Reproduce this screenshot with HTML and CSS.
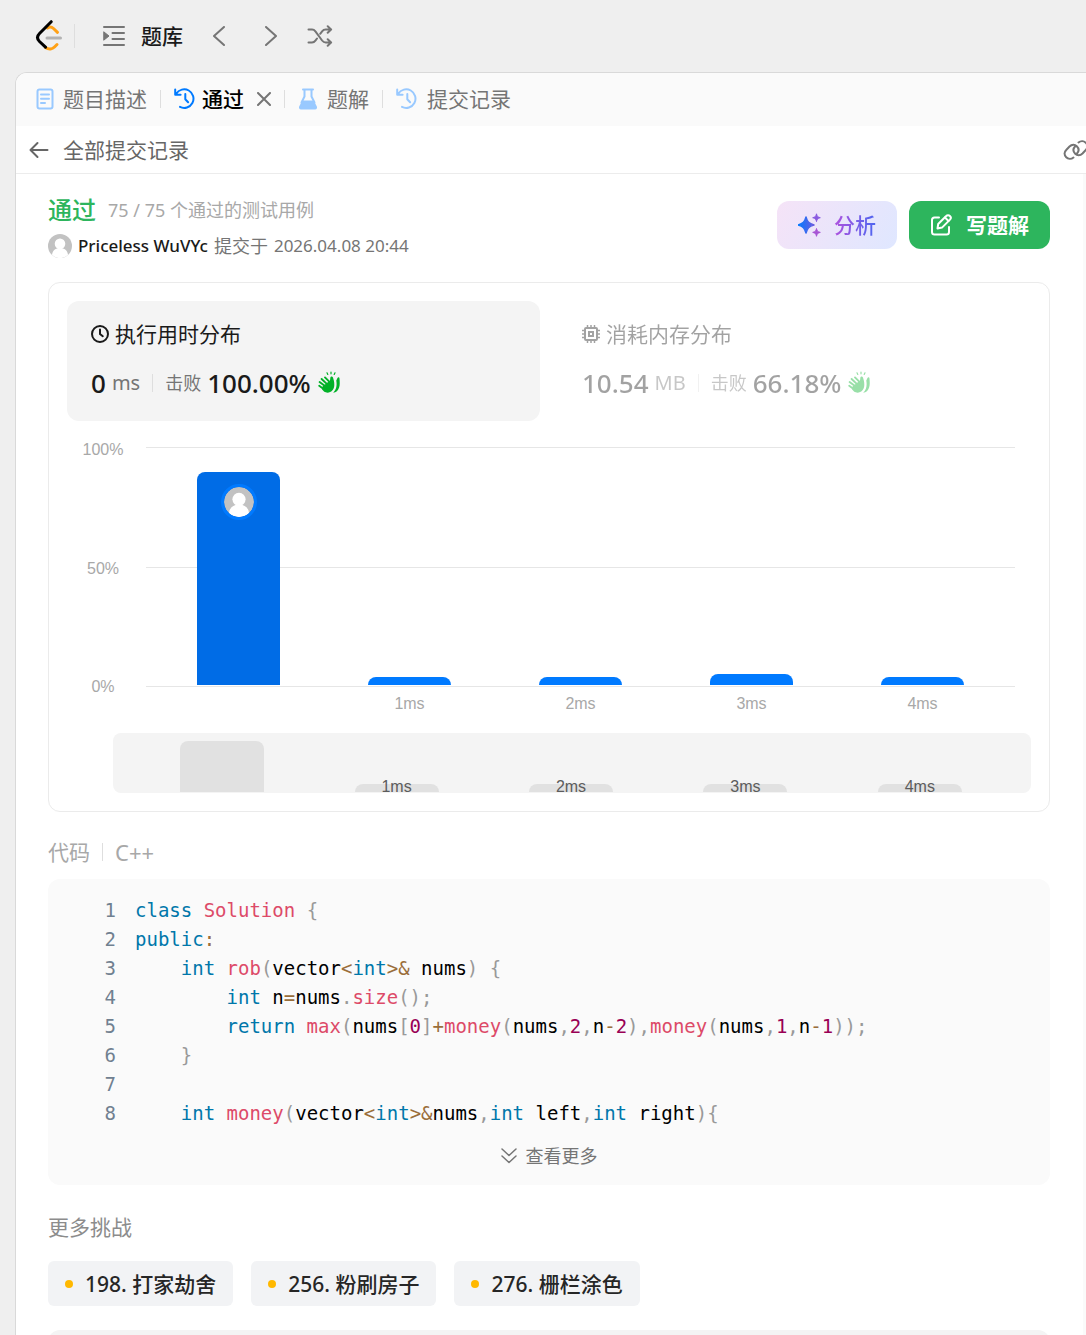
FILE: index.html
```
<!DOCTYPE html>
<html lang="zh-CN">
<head>
    <meta charset="UTF-8">
    <meta name="viewport" content="width=device-width, initial-scale=1.0">
    <title>打家劫舍 - 提交记录</title>
    <link rel="stylesheet" href="styles.css">
</head>
<body>
    <svg class="sprite" aria-hidden="true">
        <symbol id="icon-history" viewBox="0 0 22 22">
            <path d="M2.2 5.8A9.3 9.3 0 1 1 6 18.9M1.2 1.5v5.2h5.4M11.3 6v5.2l2.8 3" fill="none" stroke="currentColor" stroke-width="2" stroke-linecap="round" stroke-linejoin="round"/>
        </symbol>
        <symbol id="icon-clap" viewBox="0 0 24 24">
            <path d="M2.2 14.800l4.400 3.200M2.600 11l6 4.600M4.600 8l6 5.600M8 6.400l5 5" fill="none" stroke="currentColor" stroke-width="1.900" stroke-linecap="round"/>
            <path d="M5.500 15.500l7.500-6 .4-3c.2-1.400 2.200-1.400 2.600 0 .6 2.200 1.400 4.200 1.300 7.600-.1 4.600-3.100 7.600-6.800 7.600-2.600 0-4.200-1.600-5.500-3.400z" fill="currentColor"/>
            <path d="M19.300 9.600l1.300-2.800c.6-1 1.800-.6 1.900.6.2 3 .6 6.400-.4 9.200-.9 3-2.900 5-5.900 5.200 3-3 4-6.600 3.100-12.200z" fill="currentColor"/>
            <path d="M10 1.800l.8 1.600M14 1v1.800M18 1.800l-.8 1.600" fill="none" stroke="currentColor" stroke-width="1.200" stroke-linecap="round"/>
        </symbol>
        <symbol id="icon-avatar" viewBox="0 0 30 30">
            <circle cx="15" cy="15" r="15" fill="#c2c2c2"/>
            <circle cx="15" cy="12.300" r="6.600" fill="#fff"/>
            <path d="M5 26.300C5.500 20.500 9.500 17.500 15 17.500s9.500 3 10 8.800A15 15 0 0 1 5 26.300z" fill="#fff"/>
        </symbol>
    </svg>

    <header class="topbar">
        <a class="logo" href="#" aria-label="首页">
            <svg width="28" height="32" viewBox="0 0 28 32" fill="none" stroke-width="3" stroke-linecap="round" stroke-linejoin="round">
                <path d="M12.500 8c2-1.500 4.200-1.200 6 .5l4 3.800M10.500 27.500c3.500 2.500 7 1.500 9-.5l2.500-2.500" stroke="#ffa116"/>
                <path d="M12 18h13.500" stroke="#b3b3b3"/>
                <path d="M16.200 1.700L4.500 13.500c-2.500 2.500-2.500 5.500 0 8l6 5.700" stroke="#000"/>
            </svg>
        </a>
        <span class="divider topbar-divider"></span>
        <button class="nav-list" type="button">
            <svg width="24" height="22" viewBox="0 0 24 22" fill="none" stroke="#757575" stroke-width="2" stroke-linecap="round">
                <path d="M2 2h20M10.500 8h11.500M10.500 14h11.500M2 20h20"/>
                <path d="M2 7l5 4-5 4z" fill="#757575" stroke-width="1" stroke-linejoin="round"/>
            </svg>
            <span>题库</span>
        </button>
        <button class="nav-arrow" type="button" aria-label="上一题">
            <svg width="12" height="20" viewBox="0 0 12 20" fill="none" stroke="#757575" stroke-width="2" stroke-linecap="round" stroke-linejoin="round"><path d="M11 1L1 10l10 9"/></svg>
        </button>
        <button class="nav-arrow" type="button" aria-label="下一题">
            <svg width="12" height="20" viewBox="0 0 12 20" fill="none" stroke="#757575" stroke-width="2" stroke-linecap="round" stroke-linejoin="round"><path d="M1 1l10 9-10 9"/></svg>
        </button>
        <button class="nav-arrow" type="button" aria-label="随机一题">
            <svg width="26" height="22" viewBox="0 0 26 22" fill="none" stroke="#757575" stroke-width="2" stroke-linecap="round" stroke-linejoin="round">
                <path d="M1.500 4.500h3.500c1.500 0 2.500.6 3.400 1.800l6.700 9.200c1 1.300 2 2 3.600 2h5M1.500 17.500h3.500c1.500 0 2.500-.6 3.400-1.800l1.600-2.200M13.200 8.800l1.900-2.500c1-1.300 2-1.800 3.600-1.800h5M20.700 1.300l3.400 3.200-3.400 3.300M20.700 14.200l3.400 3.300-3.400 3.200"/>
            </svg>
        </button>
    </header>

    <main class="panel">
        <nav class="tabs">
            <a class="tab" href="#">
                <svg class="tab-icon" width="18" height="22" viewBox="0 0 18 22" fill="none" stroke="currentColor" stroke-width="2" stroke-linecap="round"><rect x="1.500" y="1.500" width="15" height="19" rx="2"/><path d="M5 6.500h8M5 10.700h8M5 15h4"/></svg>
                题目描述
            </a>
            <span class="divider"></span>
            <a class="tab active" href="#">
                <svg class="tab-icon" width="22" height="22"><use href="#icon-history"/></svg>
                通过
            </a>
            <button class="tab-close" type="button" aria-label="关闭">
                <svg width="14" height="14" viewBox="0 0 14 14" stroke="#757575" stroke-width="2" stroke-linecap="round"><path d="M1 1l12 12M13 1L1 13"/></svg>
            </button>
            <span class="divider"></span>
            <a class="tab" href="#">
                <svg class="tab-icon" width="20" height="22" viewBox="0 0 20 22"><path d="M5 1.500h10M6.500 2v6.500l-3 6M13.500 2v6.500l3 6" fill="none" stroke="currentColor" stroke-width="2" stroke-linecap="round"/><path d="M4.200 12.500h11.600l3 6c.7 1.500-.1 3-1.800 3H3c-1.700 0-2.500-1.500-1.800-3z" fill="currentColor"/></svg>
                题解
            </a>
            <span class="divider"></span>
            <a class="tab" href="#">
                <svg class="tab-icon" width="22" height="22"><use href="#icon-history"/></svg>
                提交记录
            </a>
        </nav>

        <div class="subheader">
            <a class="back" href="#">
                <svg width="20" height="18" viewBox="0 0 20 18" fill="none" stroke="#666" stroke-width="2" stroke-linecap="round" stroke-linejoin="round"><path d="M18.500 9H1.500M8.500 2L1.500 9l7 7"/></svg>
                <span>全部提交记录</span>
            </a>
            <button class="copy-link" type="button" aria-label="复制链接">
                <svg width="26" height="20" viewBox="0 0 26 20" fill="none" stroke="#757575" stroke-width="2" stroke-linecap="round" stroke-linejoin="round">
                    <path d="M10.500 17.500c-2.500 2-5.500 1.500-7.300-.3-2.200-2.200-2.200-5 0-7.200L6.500 6.500c2.300-2.200 5.300-2.200 7.300-.2 2.200 2.200 2.200 5 .2 7.200"/>
                    <path d="M15.500 2.500c2.500-2 5.500-1.500 7.300.3 2.200 2.200 2.200 5 0 7.200l-3.300 3.500c-2.300 2.200-5.300 2.200-7.300.2-2.200-2.200-2.200-5-.2-7.200"/>
                </svg>
            </button>
        </div>

        <div class="content">
            <section class="summary">
                <div class="summary-info">
                    <div class="status-row">
                        <h1>通过</h1>
                        <span class="cases">75 / 75 个通过的测试用例</span>
                    </div>
                    <div class="user-row">
                        <svg class="avatar" width="24" height="24"><use href="#icon-avatar"/></svg>
                        <strong>Priceless WuVYc</strong>
                        <span>提交于</span>
                        <time>2026.04.08 20:44</time>
                    </div>
                </div>
                <div class="actions">
                    <button class="btn btn-analyze" type="button">
                        <svg width="24" height="24" viewBox="0 0 24 24">
                            <defs>
                                <linearGradient id="spark-blue" x1="0" y1="0" x2="1" y2="0"><stop offset="0" stop-color="#007aff"/><stop offset="1" stop-color="#6b5be0"/></linearGradient>
                            </defs>
                            <path d="M8 4c1.300 5 3 6.700 8 8-5 1.300-6.700 3-8 8-1.300-5-3-6.700-8-8 5-1.300 6.700-3 8-8z" fill="url(#spark-blue)" stroke="url(#spark-blue)" stroke-width="1.500" stroke-linejoin="round"/>
                            <path d="M18.500.8c.5 2.500 1.300 3.300 3.800 3.900-2.500.5-3.300 1.300-3.800 3.900-.5-2.600-1.300-3.400-3.800-3.900 2.500-.6 3.300-1.400 3.800-3.900z" fill="#8a5be0" stroke="#8a5be0" stroke-linejoin="round"/>
                            <path d="M18.500 15.500c.5 2.500 1.300 3.300 3.800 3.900-2.500.5-3.300 1.300-3.800 3.900-.5-2.600-1.300-3.400-3.800-3.900 2.500-.6 3.300-1.400 3.800-3.900z" fill="#a755d4" stroke="#a755d4" stroke-linejoin="round"/>
                        </svg>
                        <span>分析</span>
                    </button>
                    <button class="btn btn-write" type="button">
                        <svg width="22" height="22" viewBox="0 0 22 22" fill="none" stroke="#fff" stroke-width="2" stroke-linecap="round" stroke-linejoin="round">
                            <path d="M9 3.500H4.500a2.500 2.500 0 0 0-2.500 2.500v12a2.500 2.500 0 0 0 2.500 2.500h12a2.500 2.500 0 0 0 2.500-2.500v-5M7.500 14.500l.7-4.500 8-8a2.300 2.300 0 0 1 3.800 3.600l-8 8z"/>
                            <path d="M15 3.500l3.500 3.500"/>
                        </svg>
                        <span>写题解</span>
                    </button>
                </div>
            </section>

            <section class="card">
                <div class="metrics">
                    <div class="metric selected">
                        <div class="metric-title">
                            <svg width="18" height="18" viewBox="0 0 18 18" fill="none" stroke="currentColor" stroke-width="2" stroke-linecap="round"><circle cx="9" cy="9" r="8"/><path d="M9 4.500V9l2.800 2.200"/></svg>
                            <h2>执行用时分布</h2>
                        </div>
                        <div class="metric-values">
                            <span class="value">0</span>
                            <span class="unit">ms</span>
                            <span class="divider"></span>
                            <span class="beats">击败</span>
                            <span class="value">100.00%</span>
                            <svg class="clap" width="24" height="24"><use href="#icon-clap"/></svg>
                        </div>
                    </div>
                    <div class="metric muted">
                        <div class="metric-title">
                            <svg width="18" height="18" viewBox="0 0 18 18" fill="none" stroke="currentColor" stroke-width="2"><rect x="3" y="3" width="12" height="12" rx="1"/><rect x="7" y="7" width="4" height="4"/><path d="M5.500 0v3M9 0v3M12.500 0v3M5.500 15v3M9 15v3M12.500 15v3M0 5.500h3M0 9h3M0 12.500h3M15 5.500h3M15 9h3M15 12.500h3" stroke-width="1.500"/></svg>
                            <h2>消耗内存分布</h2>
                        </div>
                        <div class="metric-values">
                            <span class="value">10.54</span>
                            <span class="unit">MB</span>
                            <span class="divider"></span>
                            <span class="beats">击败</span>
                            <span class="value">66.18%</span>
                            <svg class="clap" width="24" height="24"><use href="#icon-clap"/></svg>
                        </div>
                    </div>
                </div>

                <div class="chart">
                    <div class="y-axis">
                        <span>100%</span>
                        <span>50%</span>
                        <span>0%</span>
                    </div>
                    <div class="plot">
                        <div class="gridlines">
                            <div></div>
                            <div></div>
                        </div>
                        <div class="bars">
                            <div class="bar current" style="height: 213px">
                                <svg class="bar-avatar" width="30" height="30"><use href="#icon-avatar"/></svg>
                            </div>
                            <div class="bar" style="height: 8px"></div>
                            <div class="bar" style="height: 8px"></div>
                            <div class="bar" style="height: 11px"></div>
                            <div class="bar" style="height: 8px"></div>
                        </div>
                        <div class="x-axis">
                            <span></span>
                            <span>1ms</span>
                            <span>2ms</span>
                            <span>3ms</span>
                            <span>4ms</span>
                        </div>
                    </div>
                </div>

                <div class="overview">
                    <div class="overview-item"><div class="overview-bar" style="height: 51px"></div></div>
                    <div class="overview-item"><div class="overview-bar" style="height: 8px"></div><span>1ms</span></div>
                    <div class="overview-item"><div class="overview-bar" style="height: 8px"></div><span>2ms</span></div>
                    <div class="overview-item"><div class="overview-bar" style="height: 8px"></div><span>3ms</span></div>
                    <div class="overview-item"><div class="overview-bar" style="height: 8px"></div><span>4ms</span></div>
                </div>
            </section>

            <div class="code-header">
                <span>代码</span>
                <span class="divider"></span>
                <span class="lang">C++</span>
            </div>
            <section class="code-box">
<pre class="code"><span class="line"><i>1</i><b class="k">class</b> <b class="f">Solution</b> <b class="p">{</b></span>
<span class="line"><i>2</i><b class="k">public</b><b class="o">:</b></span>
<span class="line"><i>3</i>    <b class="k">int</b> <b class="f">rob</b><b class="p">(</b>vector<b class="o">&lt;</b><b class="k">int</b><b class="o">&gt;&amp;</b> nums<b class="p">)</b> <b class="p">{</b></span>
<span class="line"><i>4</i>        <b class="k">int</b> n<b class="o">=</b>nums<b class="p">.</b><b class="f">size</b><b class="p">();</b></span>
<span class="line"><i>5</i>        <b class="k">return</b> <b class="f">max</b><b class="p">(</b>nums<b class="p">[</b><b class="n">0</b><b class="p">]</b><b class="o">+</b><b class="f">money</b><b class="p">(</b>nums<b class="p">,</b><b class="n">2</b><b class="p">,</b>n<b class="o">-</b><b class="n">2</b><b class="p">),</b><b class="f">money</b><b class="p">(</b>nums<b class="p">,</b><b class="n">1</b><b class="p">,</b>n<b class="o">-</b><b class="n">1</b><b class="p">));</b></span>
<span class="line"><i>6</i>    <b class="p">}</b></span>
<span class="line"><i>7</i></span>
<span class="line"><i>8</i>    <b class="k">int</b> <b class="f">money</b><b class="p">(</b>vector<b class="o">&lt;</b><b class="k">int</b><b class="o">&gt;&amp;</b>nums<b class="p">,</b><b class="k">int</b> left<b class="p">,</b><b class="k">int</b> right<b class="p">){</b></span></pre>
                <button class="show-more" type="button">
                    <svg width="16" height="16" viewBox="0 0 16 16" fill="none" stroke="#757575" stroke-width="1.500" stroke-linecap="round" stroke-linejoin="round"><path d="M1 1l7 6.500L15 1M1 8l7 6.500L15 8"/></svg>
                    <span>查看更多</span>
                </button>
            </section>

            <h3 class="more-title">更多挑战</h3>
            <div class="challenges">
                <a class="chip" href="#"><span class="dot"></span>198. 打家劫舍</a>
                <a class="chip" href="#"><span class="dot"></span>256. 粉刷房子</a>
                <a class="chip" href="#"><span class="dot"></span>276. 栅栏涂色</a>
            </div>
            <textarea class="notes" aria-label="备注"></textarea>
        </div>
    </main>
</body>
</html>
```
FILE: styles.css
```
* {
    box-sizing: border-box;
}
body {
    margin: 0;
    height: 100vh;
    display: flex;
    flex-direction: column;
    overflow: hidden;
    background-color: #efefef;
    color: #1a1a1a;
    font-family: "Noto Sans", "Noto Sans CJK SC", sans-serif;
    font-size: 18px;
    line-height: 24px;
}
h1, h2, h3 {
    margin: 0;
    font-weight: normal;
}
a {
    color: inherit;
    text-decoration: none;
}
button {
    display: flex;
    align-items: center;
    padding: 0;
    border: none;
    background: none;
    font: inherit;
    color: inherit;
    cursor: pointer;
}
svg {
    display: block;
    flex-shrink: 0;
}
.sprite {
    position: absolute;
    width: 0;
    height: 0;
}
.divider {
    width: 1px;
    height: 18px;
    background-color: #dedede;
}

/* top bar */
.topbar {
    display: flex;
    align-items: center;
    height: 72px;
    flex-shrink: 0;
    padding-left: 35px;
}
.topbar-divider {
    height: 24px;
    margin: 0 27px 0 11px;
}
.nav-list {
    gap: 15px;
    font-size: 21px;
    font-weight: 500;
}
.nav-arrow {
    margin-left: 30px;
}
.nav-arrow + .nav-arrow {
    margin-left: 40px;
}
.nav-arrow + .nav-arrow + .nav-arrow {
    margin-left: 30px;
}

/* panel */
.panel {
    flex: 1;
    min-height: 0;
    display: flex;
    flex-direction: column;
    margin-left: 15px;
    border-top: 1px solid #d9d9d9;
    border-left: 1px solid #d9d9d9;
    border-top-left-radius: 12px;
    background-color: #fff;
    overflow: hidden;
}
.tabs {
    display: flex;
    align-items: center;
    gap: 13px;
    height: 53px;
    flex-shrink: 0;
    padding: 0 0 2px 20px;
    background-color: #fafafa;
}
.tab {
    display: flex;
    align-items: center;
    gap: 9px;
    font-size: 21px;
    color: #757575;
}
.tab-icon {
    color: #99c9ff;
}
.tab.active {
    gap: 6px;
    font-weight: 500;
    color: #000;
}
.tab.active .tab-icon {
    color: #007aff;
}
.subheader {
    display: flex;
    align-items: center;
    justify-content: space-between;
    height: 48px;
    flex-shrink: 0;
    padding-left: 13px;
    border-bottom: 1px solid #ececec;
}
.back {
    display: flex;
    align-items: center;
    gap: 14px;
    font-size: 21px;
    color: #666;
}
.copy-link {
    margin-right: -3px;
}
.content {
    flex: 1;
    min-height: 0;
    padding: 24px 33px 0 32px;
    border-right: 3px solid #fafafa;
    overflow: hidden;
}

/* summary */
.summary {
    display: flex;
    justify-content: space-between;
    margin-bottom: 24px;
}
.status-row {
    display: flex;
    align-items: center;
    gap: 12px;
    height: 24px;
}
.status-row h1 {
    font-size: 24px;
    font-weight: 500;
    color: #2db55d;
}
.cases {
    color: #a8a8a8;
}
.user-row {
    display: flex;
    align-items: center;
    gap: 6px;
    margin-top: 12px;
    color: #757575;
}
.user-row strong {
    font-size: 17px;
    font-weight: 500;
    color: #1a1a1a;
}
.user-row time {
    font-size: 17px;
}
.actions {
    display: flex;
    gap: 12px;
    margin-top: 3px;
}
.btn {
    gap: 12px;
    height: 48px;
    padding: 0 21px;
    border-radius: 12px;
    font-size: 21px;
    font-weight: 500;
}
.btn-analyze {
    background: linear-gradient(120deg, #f5e3f7, #dfe7ff);
}
.btn-analyze span {
    background: linear-gradient(90deg, #af52de, #4d66f0);
    background-clip: text;
    -webkit-background-clip: text;
    color: transparent;
}
.btn-write {
    gap: 14px;
    background-color: #2db55d;
    color: #fff;
    font-weight: 700;
}

/* distribution card */
.card {
    padding: 18px;
    border: 1px solid #ebebeb;
    border-radius: 12px;
}
.metrics {
    display: grid;
    grid-template-columns: 1fr 1fr;
    gap: 18px;
}
.metric {
    height: 120px;
    padding: 21px 24px;
    border-radius: 12px;
}
.metric.selected {
    background-color: #f4f4f4;
}
.metric.muted {
    opacity: 0.4;
}
.metric-title {
    display: flex;
    align-items: center;
    gap: 6px;
}
.metric-title h2 {
    font-size: 21px;
}
.metric-values {
    display: flex;
    align-items: center;
    gap: 6px;
    margin-top: 25px;
}
.metric-values .divider {
    margin: 0 6px;
}
.value {
    font-size: 26px;
    font-weight: 500;
}
.unit {
    font-size: 20px;
    color: #757575;
}
.beats {
    color: #757575;
}
.clap {
    color: #02b128;
}

/* chart */
.chart {
    display: flex;
    margin-top: 26px;
    font-family: "Liberation Sans", Arial, sans-serif;
    font-size: 16px;
    color: #a8a8a8;
}
.y-axis {
    display: flex;
    flex-direction: column;
    justify-content: space-between;
    align-items: center;
    width: 72px;
    height: 261px;
    margin-top: -9px;
}
.plot {
    flex: 1;
    display: grid;
    grid-template-rows: 240px 34px;
    margin: 0 16px 0 7px;
}
.gridlines,
.bars {
    grid-area: 1 / 1;
}
.gridlines {
    display: grid;
    border-bottom: 1px solid #e6e6e6;
}
.gridlines div {
    border-top: 1px solid #e6e6e6;
}
.bars,
.x-axis {
    display: grid;
    grid-template-columns: repeat(5, 1fr);
    justify-items: center;
    padding: 0 7px;
}
.bars {
    align-items: end;
    padding-bottom: 2px;
}
.bar {
    width: 83px;
    background-color: #007aff;
    border-radius: 8px 8px 0 0;
}
.bar.current {
    display: flex;
    justify-content: center;
    padding-top: 12px;
    background-color: #006ce6;
}
.bar-avatar {
    box-sizing: content-box;
    border: 3px solid #007aff;
    border-radius: 50%;
}
.x-axis {
    align-items: center;
}
.overview {
    display: grid;
    grid-template-columns: repeat(5, 1fr);
    height: 60px;
    margin: 12px 0 0 46px;
    padding: 0 24px 0 22px;
    border-radius: 8px;
    background-color: #f4f4f4;
    font-family: "Liberation Sans", Arial, sans-serif;
    font-size: 16px;
    line-height: 12px;
    color: #5c5c5c;
    overflow: hidden;
}
.overview-item {
    display: grid;
    justify-items: center;
    align-items: end;
}
.overview-item > * {
    grid-area: 1 / 1;
}
.overview-bar {
    width: 84px;
    margin-bottom: 1px;
    border-radius: 8px 8px 0 0;
    background-color: #e1e1e1;
}

/* code */
.code-header {
    display: flex;
    align-items: center;
    gap: 12px;
    margin: 28px 0 15px;
    font-size: 21px;
    color: #a8a8a8;
}
.lang {
    font-size: 22px;
}
.code-box {
    display: flex;
    flex-direction: column;
    align-items: center;
    padding: 17px 0 17px;
    border-radius: 12px;
    background-color: #fafafa;
}
.code {
    width: 100%;
    margin: 0;
    font-family: "DejaVu Sans Mono", monospace;
    font-size: 19px;
    line-height: 29px;
    color: #000;
}
.code i {
    display: inline-block;
    width: 68px;
    margin-right: 19px;
    font-style: normal;
    text-align: right;
    color: #708090;
}
.code b {
    font-weight: normal;
}
.code .k {
    color: #0077aa;
}
.code .f {
    color: #dd4a68;
}
.code .p {
    color: #999;
}
.code .o {
    color: #9a6e3a;
}
.code .n {
    color: #990055;
}
.show-more {
    gap: 9px;
    margin-top: 16px;
    color: #757575;
}

/* more challenges */
.more-title {
    margin: 30px 0 22px;
    font-size: 21px;
    color: #8c8c8c;
}
.challenges {
    display: flex;
    gap: 18px;
}
.chip {
    display: flex;
    align-items: center;
    height: 45px;
    padding: 0 17px;
    border-radius: 6px;
    background-color: #f2f3f5;
    font-size: 21px;
    font-weight: 500;
    color: #262626;
}
.dot {
    width: 8px;
    height: 8px;
    margin-right: 12px;
    border-radius: 50%;
    background-color: #ffb800;
}
.notes {
    display: block;
    width: 100%;
    height: 120px;
    margin-top: 24px;
    border: none;
    border-radius: 12px;
    background-color: #f4f4f4;
    resize: none;
}
```
